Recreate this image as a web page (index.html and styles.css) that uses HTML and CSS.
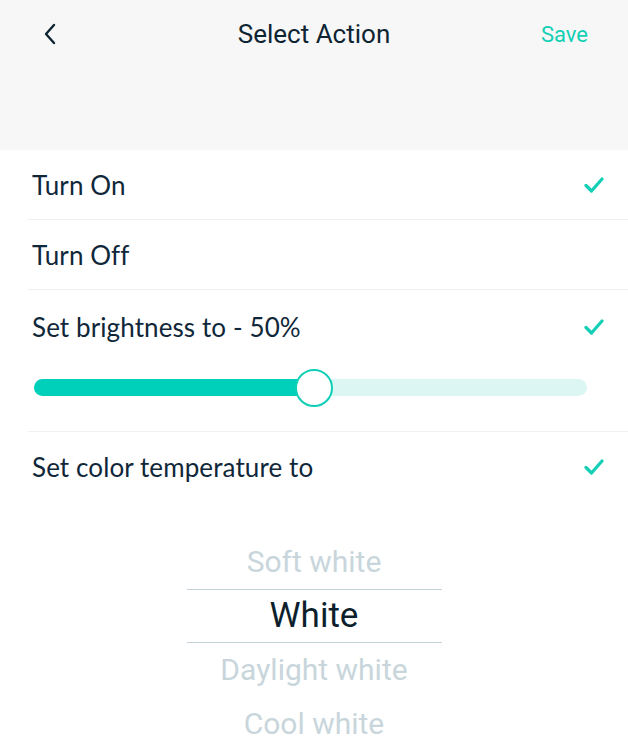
FILE: index.html
```html
<!DOCTYPE html>
<html>
<head>
<meta charset="utf-8">
<link rel="stylesheet" href="styles.css">
</head>
<body>
<header class="header">
  <div class="topbar">
    <svg class="back" width="14" height="22" viewBox="0 0 14 22"><polyline points="11,2 3,11 11,20" fill="none" stroke="#0e2433" stroke-width="2.4" stroke-linecap="round" stroke-linejoin="round"/></svg>
    <div class="title">Select Action</div>
    <div class="save">Save</div>
  </div>
</header>
<main class="list">
  <div class="row">
    <div class="row-head">
      <span class="label">Turn On</span>
      <svg class="check" width="20" height="18" viewBox="0 0 20 18"><polyline points="2,9.5 7.5,15 18,3" fill="none" stroke="#12cfb5" stroke-width="3.2" stroke-linecap="round" stroke-linejoin="round"/></svg>
    </div>
  </div>
  <div class="row">
    <div class="row-head">
      <span class="label">Turn Off</span>
    </div>
  </div>
  <div class="row">
    <div class="row-head tall">
      <span class="label">Set brightness to - 50%</span>
      <svg class="check" width="20" height="18" viewBox="0 0 20 18"><polyline points="2,9.5 7.5,15 18,3" fill="none" stroke="#12cfb5" stroke-width="3.2" stroke-linecap="round" stroke-linejoin="round"/></svg>
    </div>
    <div class="slider">
      <div class="track">
        <div class="fill" style="width:50.6%"></div>
        <div class="thumb" style="left:50.6%"></div>
      </div>
    </div>
  </div>
  <div class="row last">
    <div class="row-head">
      <span class="label">Set color temperature to</span>
      <svg class="check" width="20" height="18" viewBox="0 0 20 18"><polyline points="2,9.5 7.5,15 18,3" fill="none" stroke="#12cfb5" stroke-width="3.2" stroke-linecap="round" stroke-linejoin="round"/></svg>
    </div>
  </div>
</main>
<section class="picker">
  <div class="opt">Soft white</div>
  <div class="opt selected">White</div>
  <div class="opt">Daylight white</div>
  <div class="opt">Cool white</div>
</section>
</body>
</html>
```

FILE: styles.css
```css
html, body {
  margin: 0;
  padding: 0;
  background: #ffffff;
  overflow: hidden;
}
body {
  width: 628px;
  height: 750px;
  font-family: Lato, "Noto Sans", sans-serif;
  color: #0e2433;
}
.header {
  height: 150px;
  background: #f7f7f7;
}
.topbar {
  height: 68px;
  display: flex;
  align-items: center;
  justify-content: space-between;
  padding: 0 40px 0 43px;
  position: relative;
}
.back {
  display: block;
}
.title {
  position: absolute;
  left: 0;
  right: 0;
  text-align: center;
  font-family: Roboto, sans-serif;
  font-size: 26px;
  color: #0e2433;
  pointer-events: none;
}
.save {
  font-family: Roboto, sans-serif;
  font-size: 22px;
  color: #12cfb5;
}
.list {
  margin-left: 28px;
}
.row {
  border-bottom: 1px solid #f0f0f0;
}
.row.last {
  border-bottom: none;
}
.row-head {
  height: 69px;
  display: flex;
  align-items: center;
  justify-content: space-between;
  padding: 0 24px 0 4px;
}
.row-head.tall {
  height: 73px;
}
.label {
  font-size: 26px;
  letter-spacing: 0.1px;
  color: #10273a;
}
.check {
  display: block;
}
.slider {
  height: 68px;
  padding: 0 41px 0 6px;
  box-sizing: border-box;
}
.track {
  position: relative;
  top: 16px;
  height: 17px;
  border-radius: 9px;
  background: #dcf7f3;
}
.fill {
  height: 100%;
  border-radius: 9px;
  background: #00cfb9;
}
.thumb {
  position: absolute;
  top: 50%;
  width: 34px;
  height: 34px;
  border: 2px solid #10cfb7;
  border-radius: 50%;
  background: #ffffff;
  transform: translate(-50%, -50%);
}
.picker {
  width: 255px;
  margin: 34px auto 0;
  font-family: Roboto, sans-serif;
  text-align: center;
}
.opt {
  height: 54px;
  line-height: 54px;
  font-size: 30px;
  color: #c8d6dc;
}
.opt.selected {
  height: 52px;
  line-height: 52px;
  font-size: 35px;
  color: #0d1f2d;
  border-top: 1px solid #c5d3da;
  border-bottom: 1px solid #c5d3da;
}
```
